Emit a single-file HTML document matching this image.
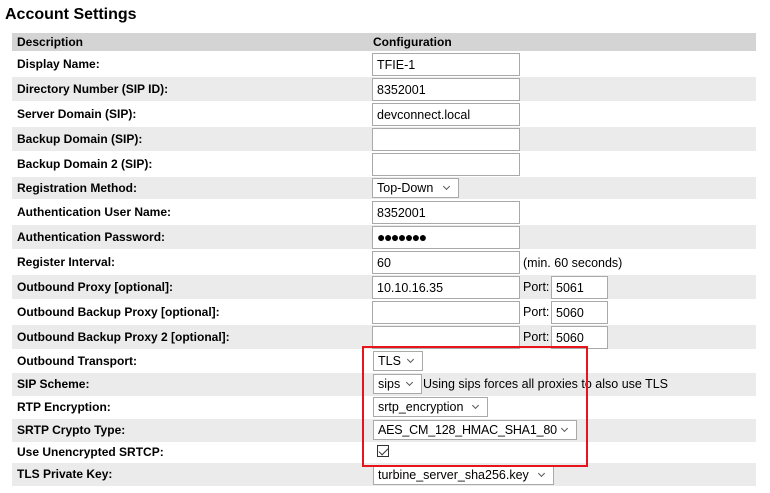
<!DOCTYPE html>
<html><head><style>
body{margin:0;background:#fff;font-family:"Liberation Sans",Arial,sans-serif;font-size:12px;color:#000;width:770px;height:493px;position:relative;overflow:hidden}
.a{position:absolute}
h1{position:absolute;left:5px;top:6px;margin:0;font-size:16px;font-weight:bold}
.r{position:absolute;left:12px;width:744px}
.g{background:#ebebeb}
.l{position:absolute;left:17px;font-weight:bold;font-size:12px}
.in{position:absolute;border:1px solid #a9a9a9;background:#fff;box-sizing:border-box;font-size:12.5px;padding:4px 0 0 4px;white-space:nowrap}
.sel{position:absolute;border:1px solid #a9a9a9;background:#fff;box-sizing:border-box;font-size:12.5px;padding:2px 0 0 4px;white-space:nowrap;overflow:hidden}
.sel:after{content:"";position:absolute;right:9px;top:5px;width:4px;height:4px;border-right:1px solid #555;border-bottom:1px solid #555;transform:rotate(45deg)}
.t{position:absolute;font-size:12.5px;white-space:nowrap}
</style></head><body>
<h1>Account Settings</h1>
<div class="r a" style="top:33px;height:18px;background:#d4d4d4"></div>
<div class="l" style="top:35px">Description</div>
<div class="l" style="top:35px;left:373px">Configuration</div>

<div class="r g" style="top:77px;height:24px"></div>
<div class="r g" style="top:127px;height:24px"></div>
<div class="r g" style="top:177px;height:22px"></div>
<div class="r g" style="top:225px;height:24px"></div>
<div class="r g" style="top:275px;height:24px"></div>
<div class="r g" style="top:325px;height:24px"></div>
<div class="r g" style="top:373px;height:23px"></div>
<div class="r g" style="top:419px;height:23px"></div>
<div class="r g" style="top:463px;height:23px"></div>

<div class="l" style="top:57px">Display Name:</div>
<div class="l" style="top:82px">Directory Number (SIP ID):</div>
<div class="l" style="top:107px">Server Domain (SIP):</div>
<div class="l" style="top:132px">Backup Domain (SIP):</div>
<div class="l" style="top:157px">Backup Domain 2 (SIP):</div>
<div class="l" style="top:181px">Registration Method:</div>
<div class="l" style="top:205px">Authentication User Name:</div>
<div class="l" style="top:230px">Authentication Password:</div>
<div class="l" style="top:255px">Register Interval:</div>
<div class="l" style="top:280px">Outbound Proxy [optional]:</div>
<div class="l" style="top:305px">Outbound Backup Proxy [optional]:</div>
<div class="l" style="top:330px">Outbound Backup Proxy 2 [optional]:</div>
<div class="l" style="top:354px">Outbound Transport:</div>
<div class="l" style="top:377px">SIP Scheme:</div>
<div class="l" style="top:400px">RTP Encryption:</div>
<div class="l" style="top:423px">SRTP Crypto Type:</div>
<div class="l" style="top:445px">Use Unencrypted SRTCP:</div>
<div class="l" style="top:467px">TLS Private Key:</div>

<div class="in" style="left:372px;top:53px;width:148px;height:23px">TFIE-1</div>
<div class="in" style="left:372px;top:78px;width:148px;height:23px">8352001</div>
<div class="in" style="left:372px;top:103px;width:148px;height:23px">devconnect.local</div>
<div class="in" style="left:372px;top:128px;width:148px;height:23px"></div>
<div class="in" style="left:372px;top:153px;width:148px;height:23px"></div>
<div class="sel" style="left:372px;top:178px;width:87px;height:20px">Top-Down</div>
<div class="in" style="left:372px;top:201px;width:148px;height:23px">8352001</div>
<div class="in" style="left:372px;top:226px;width:148px;height:23px;font-size:14px;letter-spacing:-1.5px;padding-top:2px">●●●●●●●</div>
<div class="in" style="left:372px;top:251px;width:148px;height:23px">60</div>
<div class="t" style="left:523px;top:256px">(min. 60 seconds)</div>
<div class="in" style="left:372px;top:276px;width:148px;height:23px">10.10.16.35</div>
<div class="t" style="left:523px;top:280px">Port:</div>
<div class="in" style="left:551px;top:276px;width:57px;height:23px">5061</div>
<div class="in" style="left:372px;top:301px;width:148px;height:23px"></div>
<div class="t" style="left:523px;top:305px">Port:</div>
<div class="in" style="left:551px;top:301px;width:57px;height:23px">5060</div>
<div class="in" style="left:372px;top:326px;width:148px;height:23px"></div>
<div class="t" style="left:523px;top:330px">Port:</div>
<div class="in" style="left:551px;top:326px;width:57px;height:23px">5060</div>
<div class="sel" style="left:373px;top:351px;width:50px;height:20px">TLS</div>
<div class="sel" style="left:373px;top:374px;width:49px;height:20px">sips</div>
<div class="t" style="left:423px;top:377px">Using sips forces all proxies to also use TLS</div>
<div class="sel" style="left:373px;top:397px;width:115px;height:20px">srtp_encryption</div>
<div class="sel" style="left:373px;top:420px;width:204px;height:20px;letter-spacing:-0.2px">AES_CM_128_HMAC_SHA1_80</div>
<div class="a" style="left:377px;top:445px;width:12px;height:12px;border:1px solid #333;box-sizing:border-box;background:#fff"><div class="a" style="left:3px;top:0px;width:4px;height:8px;border-right:1px solid #333;border-bottom:1px solid #333;transform:rotate(45deg)"></div></div>
<div class="sel" style="left:373px;top:465px;width:181px;height:20px">turbine_server_sha256.key</div>
<div class="a" style="left:362px;top:346px;width:226px;height:121px;border:2px solid #e8141b;box-sizing:border-box"></div>
</body></html>
